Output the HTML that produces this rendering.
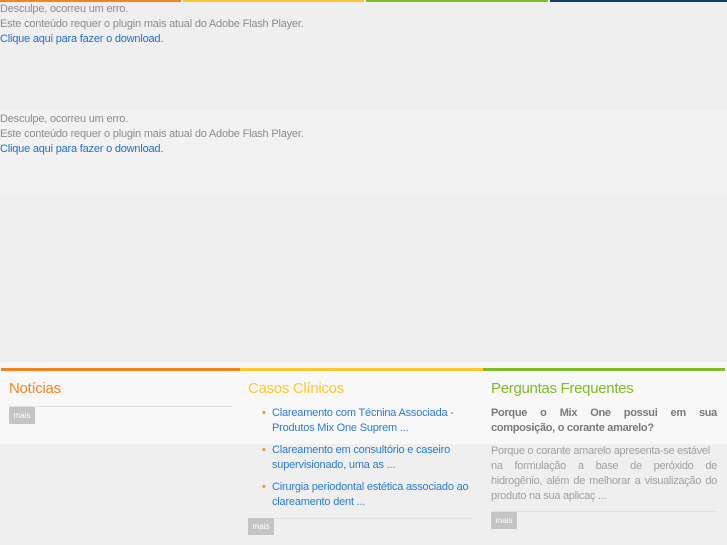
<!DOCTYPE html>
<html><head><meta charset="utf-8"><style>
body{margin:0;width:727px;height:545px;background:#efefef;font-family:"Liberation Sans",sans-serif;position:relative;overflow:hidden}
.a{position:absolute}
.msg{font-size:11px;line-height:15px;color:#8c8c8c;letter-spacing:-0.2px}
.msg a{color:#1f6fcc;text-decoration:none}
h2{margin:0;font-weight:normal;font-size:15px;letter-spacing:-0.3px}
.btn{position:absolute;background:#c4c4c4;color:#fff;font-size:8px;width:26px;height:17px;line-height:17px;text-align:center}
.li{font-size:11px;line-height:15px;color:#2a7bd1;letter-spacing:-0.2px}
.bul{position:absolute;left:-10px;color:#f08a1c}
.p{font-size:11px;line-height:15px;letter-spacing:-0.3px;white-space:nowrap}
.p span{display:block;text-align:justify;text-align-last:justify}
.p span.l{text-align-last:left}
</style></head><body>
<div class="a" style="left:0;top:0;width:181px;height:2px;background:#f5831f"></div>
<div class="a" style="left:183px;top:0;width:181px;height:2px;background:#fdc82f"></div>
<div class="a" style="left:366px;top:0;width:182px;height:2px;background:#7fba27"></div>
<div class="a" style="left:550px;top:0;width:177px;height:2px;background:#0e3d6a"></div>
<div class="a msg" style="left:0;top:2px">Desculpe, ocorreu um erro.<br>Este conteúdo requer o plugin mais atual do Adobe Flash Player.<br><a>Clique aqui para fazer o download.</a></div>
<div class="a" style="left:0;top:110px;width:727px;height:87px;background:#f2f2f2"></div>
<div class="a msg" style="left:0;top:112px">Desculpe, ocorreu um erro.<br>Este conteúdo requer o plugin mais atual do Adobe Flash Player.<br><a>Clique aqui para fazer o download.</a></div>
<div class="a" style="left:0;top:362px;width:727px;height:82px;background:#f8f8f8"></div>
<div class="a" style="left:1px;top:368px;width:239px;height:3px;background:#f5831f"></div>
<div class="a" style="left:240px;top:368px;width:243px;height:3px;background:#fdc82f"></div>
<div class="a" style="left:483px;top:368px;width:242px;height:3px;background:#7fba27"></div>
<h2 class="a" style="left:9px;top:380px;color:#f5831f">Notícias</h2>
<div class="a" style="left:9px;top:406px;width:223px;height:1px;background:#dde3ea"></div>
<div class="btn" style="left:9px;top:407px">mais</div>
<h2 class="a" style="left:248px;top:380px;color:#fdc82f">Casos Clínicos</h2>
<div class="a li" style="left:272px;top:406px;width:200px"><span class="bul">•</span>Clareamento com Técnina Associada - Produtos Mix One Suprem ...</div>
<div class="a li" style="left:272px;top:443px;width:200px"><span class="bul">•</span>Clareamento em consultório e caseiro supervisionado, uma as ...</div>
<div class="a li" style="left:272px;top:480px;width:200px"><span class="bul">•</span>Cirurgia periodontal estética associado ao clareamento dent ...</div>
<div class="a" style="left:248px;top:518px;width:226px;height:1px;background:#dde3ea"></div>
<div class="btn" style="left:248px;top:518px">mais</div>
<h2 class="a" style="left:491px;top:380px;color:#7fba27">Perguntas Frequentes</h2>
<div class="a p" style="left:491px;top:406px;width:226px;color:#7a7a7a;font-weight:bold"><span>Porque o Mix One possui em sua</span><span class="l">composição, o corante amarelo?</span></div>
<div class="a p" style="left:491px;top:444px;width:226px;color:#a0a0a0"><span class="l">Porque o corante amarelo apresenta-se estável</span><span>na formulação a base de peróxido de</span><span>hidrogênio, além de melhorar a visualização do</span><span class="l">produto na sua aplicaç ...</span></div>
<div class="a" style="left:491px;top:511px;width:226px;height:1px;background:#dde3ea"></div>
<div class="btn" style="left:491px;top:512px">mais</div>
</body></html>
